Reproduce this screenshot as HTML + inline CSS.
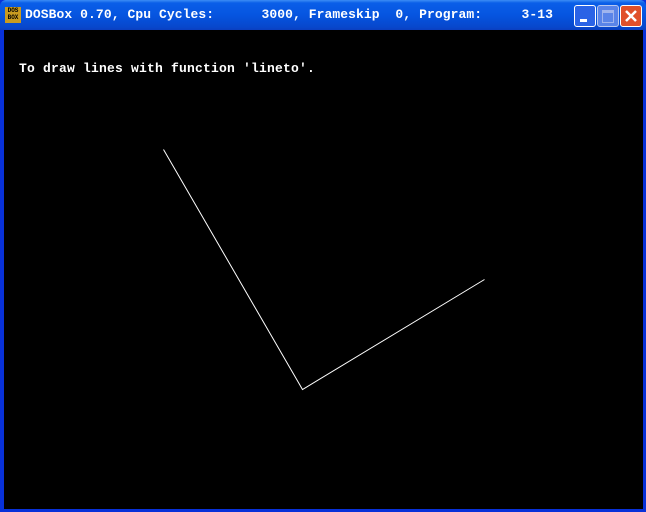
<!DOCTYPE html>
<html><head><style>
body{margin:0;width:646px;height:512px;overflow:hidden;background:#0831d9;position:relative;font-family:"Liberation Mono",monospace}
.tb{position:absolute;left:0;top:0;width:646px;height:30px;background:linear-gradient(#3d8df5 0,#0a5ee8 3px,#0655e0 15px,#0747cc 27px,#0a3ec0 30px);border-radius:6px 6px 0 0}
.ttl{position:absolute;left:25px;top:7px;color:#fff;font:bold 13px "Liberation Mono",monospace;white-space:pre;letter-spacing:0.08px}
.ic{position:absolute;left:5px;top:7px;width:16px;height:16px;background:#c89b20;color:#000;font:bold 6px "Liberation Mono";line-height:7px;text-align:center}
.b{position:absolute;top:5px;width:20px;height:20px;border:1px solid #fff;border-radius:3px;background:#2a63e6}
.scr{position:absolute;left:4px;top:30px;width:639px;height:479px;background:#000}
.t{position:absolute;left:15px;top:31px;color:#fff;font:bold 13px "Liberation Mono",monospace;white-space:pre;letter-spacing:0.2px}
</style></head><body>
<div class="tb">
<div class="ic">DOS<br>BOX</div>
<div class="ttl">DOSBox 0.70, Cpu Cycles:      3000, Frameskip  0, Program:     3-13</div>
<div class="b" style="left:574px"><div style="position:absolute;left:5px;top:13px;width:7px;height:3px;background:#fff"></div></div>
<div class="b" style="left:597px;background:#5a84e8;border-color:#b8c8f0"><div style="position:absolute;left:4px;top:4px;width:10px;height:9px;border:1px solid #9fb4ee;border-top-width:3px"></div></div>
<div class="b" style="left:620px;background:#e0502a"><svg width="20" height="20" style="position:absolute;left:0;top:0"><path d="M5 5L15 15M15 5L5 15" stroke="#fff" stroke-width="2.5"/></svg></div>
</div>
<div class="scr"><div class="t">To draw lines with function 'lineto'.</div></div>
<svg width="646" height="512" style="position:absolute;left:0;top:0"><polyline points="163.5,149.5 302.5,389.5 484.5,279.5" fill="none" stroke="#fff" stroke-width="1"/></svg>
</body></html>
